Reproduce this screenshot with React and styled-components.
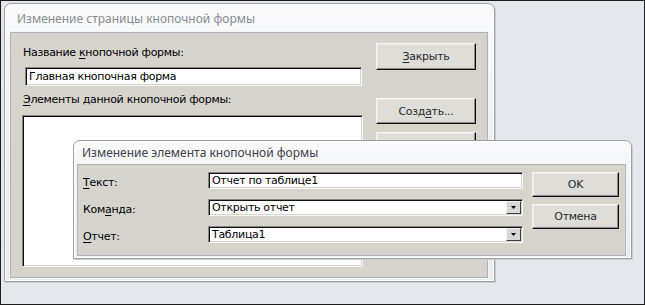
import React from "react";
import styled, { createGlobalStyle } from "styled-components";

const Global = createGlobalStyle`
  html, body { margin: 0; padding: 0; background: #e4e7eb; }
  * { box-sizing: border-box; }
`;

const Desktop = styled.div`
  position: relative;
  width: 645px;
  height: 305px;
  border: 1px solid #1c1c1c;
  background: #e4e7eb;
  overflow: hidden;
  font-family: "DejaVu Sans", Tahoma, sans-serif;
  font-size: 11px;
  letter-spacing: -0.3px;
  color: #000;
`;

const Window = styled.div`
  position: absolute;
  left: ${(p) => p.$x}px;
  top: ${(p) => p.$y}px;
  width: ${(p) => p.$w}px;
  height: ${(p) => p.$h}px;
  display: flex;
  flex-direction: column;
  padding: 0 ${(p) => p.$pr}px 3px ${(p) => p.$pl}px;
  background: linear-gradient(#fbfbfc, #eff1f4 40%, #e9ecef);
  border: 1px solid #9ba1a8;
  border-radius: 7px 7px 0 0;
  box-shadow: inset 0 0 0 1px #ffffff, 1px 1px 0 #c9ccd0;
`;

const TitleBar = styled.div`
  height: ${(p) => p.$h}px;
  flex: none;
  display: flex;
  align-items: center;
  padding-left: ${(p) => p.$indent}px;
  font-family: "Noto Sans", "Open Sans", sans-serif;
  font-size: 12px;
  letter-spacing: 0;
  color: ${(p) => (p.$active ? "#3c4148" : "#868b92")};
`;

const Client = styled.div`
  flex: 1;
  background: #d7d4ce;
  border: 1px solid #aeb3b9;
  box-shadow: 0 0 0 1px #f4f5f6;
  display: flex;
`;

const MainBody = styled(Client)`
  padding: 10px 9px 10px 11px;
  gap: 13px;
`;

const LeftCol = styled.div`
  width: 341px;
  display: flex;
  flex-direction: column;
`;

const Label = styled.div`
  height: 13px;
  line-height: 13px;
  margin: ${(p) => p.$m || "0"};
  white-space: nowrap;
`;

const U = styled.span`
  text-decoration: underline;
  text-underline-offset: 2px;
`;

const Sunken = styled.div`
  background: #ffffff;
  border-top: 1px solid #86847f;
  border-left: 1px solid #86847f;
  border-right: 1px solid #f8f8f6;
  border-bottom: 1px solid #f8f8f6;
  box-shadow: inset 1px 1px 0 #101010, inset -1px -1px 0 #d7d4ce;
`;

const TextField = styled(Sunken)`
  height: ${(p) => p.$h}px;
  margin: ${(p) => p.$m || "0"};
  display: flex;
  align-items: center;
  padding-left: 3px;
  white-space: nowrap;
  overflow: hidden;
`;

const ListBox = styled(Sunken)`
  flex: 1;
  margin-top: 9px;
`;

const ButtonCol = styled.div`
  width: ${(p) => p.$w}px;
  display: flex;
  flex-direction: column;
  gap: ${(p) => p.$gap}px;
`;

const Button = styled.div`
  height: ${(p) => p.$h}px;
  margin-top: ${(p) => p.$mt || 0}px;
  display: flex;
  align-items: center;
  justify-content: center;
  background: #dfddd7;
  border-top: 1px solid #f6f5f2;
  border-left: 1px solid #f6f5f2;
  border-right: 1px solid #0e0e0e;
  border-bottom: 1px solid #0e0e0e;
  box-shadow: inset -1px -1px 0 #8d8b86, inset 1px 1px 0 #e9e8e4;
  color: #2a2a2a;
  white-space: nowrap;
`;

const EditBody = styled(Client)`
  padding: 7px 5px 12px 4px;
  gap: 9px;
`;

const FormGrid = styled.div`
  display: grid;
  grid-template-columns: 126px 315px;
  grid-auto-rows: 17px;
  row-gap: 10px;
  align-items: center;
`;

const FieldLabel = styled.div`
  padding-left: 1px;
  padding-top: 3px;
  white-space: nowrap;
`;

const Combo = styled(TextField)`
  padding-right: 2px;
  justify-content: space-between;
`;

const DropArrow = styled.div`
  width: 15px;
  height: 13px;
  flex: none;
  display: flex;
  align-items: center;
  justify-content: center;
  background: #d9d7d1;
  border-top: 1px solid #f6f5f2;
  border-left: 1px solid #f6f5f2;
  border-right: 1px solid #404040;
  border-bottom: 1px solid #404040;
  margin-right: -1px;
`;

function Arrow() {
  return (
    <DropArrow>
      <svg width="5" height="3" viewBox="0 0 5 3">
        <path d="M0 0h5L2.5 3z" fill="#000" />
      </svg>
    </DropArrow>
  );
}

export default function App() {
  return (
    <>
      <Global />
      <Desktop>
        <Window $x={3} $y={2} $w={491} $h={279} $pl={5} $pr={6}>
          <TitleBar $h={28} $indent={7}>
            Изменение страницы кнопочной формы
          </TitleBar>
          <MainBody>
            <LeftCol>
              <Label $m="3px 0 0 1px">
                Название <U>к</U>нопочной формы:
              </Label>
              <TextField $h={19} $m="8px 1px 0 3px">
                Главная кнопочная форма
              </TextField>
              <Label $m="7px 0 0 1px">
                <U>Э</U>лементы данной кнопочной формы:
              </Label>
              <ListBox />
            </LeftCol>
            <ButtonCol $gap={8} $w={100}>
              <Button $h={27}>
                <U>З</U>акрыть
              </Button>
              <Button $h={26} $mt={20}>
                Созд<U>а</U>ть...
              </Button>
              <Button $h={26}>
                <U>И</U>зменить...
              </Button>
            </ButtonCol>
          </MainBody>
        </Window>

        <Window $x={72} $y={139} $w={559} $h={119} $pl={3} $pr={5}>
          <TitleBar $h={23} $indent={5} $active>
            Изменение элемента кнопочной формы
          </TitleBar>
          <EditBody>
            <FormGrid>
              <FieldLabel>
                <U>Т</U>екст:
              </FieldLabel>
              <TextField $h={17}>Отчет по таблице1</TextField>
              <FieldLabel>
                Ком<U>а</U>нда:
              </FieldLabel>
              <Combo $h={17}>
                Открыть отчет
                <Arrow />
              </Combo>
              <FieldLabel>
                <U>О</U>тчет:
              </FieldLabel>
              <Combo $h={17}>
                Таблица1
                <Arrow />
              </Combo>
            </FormGrid>
            <ButtonCol $gap={7} $w={87}>
              <Button $h={25}>OK</Button>
              <Button $h={25}>Отмена</Button>
            </ButtonCol>
          </EditBody>
        </Window>
      </Desktop>
    </>
  );
}
